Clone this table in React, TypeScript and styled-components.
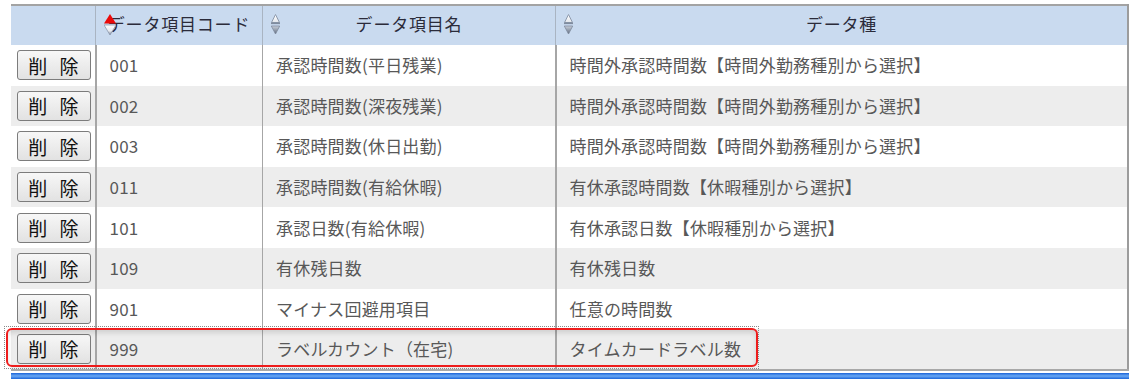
import styled, { createGlobalStyle } from "styled-components";

const GlobalStyle = createGlobalStyle`
  html, body {
    margin: 0;
    padding: 0;
    background: #ffffff;
  }
  body {
    font-family: "Noto Sans CJK JP", "Noto Sans", sans-serif;
  }
`;

const Page = styled.div`
  position: relative;
  width: 1131px;
  height: 381px;
  padding: 4px 2px 0 11px;
  box-sizing: border-box;
`;

const Grid = styled.table`
  width: 1118px;
  border-collapse: collapse;
  table-layout: fixed;
  border-top: 2px solid #a3a3a3;
  border-right: 2px solid #9c9c9c;
  border-bottom: 2px solid #a8a8a8;
`;

const HeadRow = styled.tr`
  height: 40px;
`;

const HeadCell = styled.th<{ $w?: number }>`
  position: relative;
  width: ${(p) => (p.$w ? `${p.$w}px` : "auto")};
  padding: 0 0 3px;
  line-height: 20px;
  background: #c9daef;
  border-left: 1px solid #a9b4c2;
  color: #2b2b3a;
  font-size: 17px;
  font-weight: normal;
  letter-spacing: 0.8px;
  text-align: center;
  &:first-child {
    border-left: none;
  }
`;

const Row = styled.tr<{ $alt: boolean }>`
  height: 40.6px;
  background: ${(p) => (p.$alt ? "#ededed" : "#ffffff")};
`;

const Cell = styled.td<{ $thick?: boolean }>`
  padding: 0 0 0 13px;
  line-height: 20px;
  border-left: ${(p) => (p.$thick ? "2px" : "1px")} solid #a6a6a6;
  color: #585858;
  font-size: 17px;
  letter-spacing: 0.2px;
  white-space: nowrap;
  overflow: hidden;
  vertical-align: middle;
  &:first-child {
    border-left: none;
    padding-left: 6px;
  }
`;

const DeleteButton = styled.button`
  width: 74px;
  height: 30px;
  display: flex;
  align-items: center;
  justify-content: center;
  padding: 0 0 0 3px;
  border: 1px solid #7c7c7c;
  border-radius: 3px;
  background: linear-gradient(#f7f7f7, #e2e2e2);
  color: #111;
  font-family: "Noto Sans CJK JP", sans-serif;
  font-size: 19px;
  letter-spacing: 4px;
  cursor: pointer;
`;

const SortIcon = styled.svg<{ $left: number }>`
  position: absolute;
  left: ${(p) => p.$left}px;
  top: 6px;
`;

const Highlight = styled.div`
  position: absolute;
  left: 6px;
  top: 328px;
  width: 752px;
  height: 39px;
  box-sizing: border-box;
  border: 2px solid #ee1c1c;
  border-radius: 6px;
  box-shadow: inset 0 3px 5px rgba(0, 0, 0, 0.12);
  pointer-events: none;
`;

const FocusRing = styled.div`
  position: absolute;
  left: 4px;
  top: 326px;
  width: 755px;
  height: 43px;
  box-sizing: border-box;
  border: 1px dotted #8a8a8a;
  pointer-events: none;
`;

const ScrollBar = styled.div`
  width: 1118px;
  height: 6px;
  margin-top: 2px;
  background: linear-gradient(#1b63d8, #6aa9f4 50%, #1d66da);
`;

type Item = { code: string; name: string; kind: string };

const items: Item[] = [
  { code: "001", name: "承認時間数(平日残業)", kind: "時間外承認時間数【時間外勤務種別から選択】" },
  { code: "002", name: "承認時間数(深夜残業)", kind: "時間外承認時間数【時間外勤務種別から選択】" },
  { code: "003", name: "承認時間数(休日出勤)", kind: "時間外承認時間数【時間外勤務種別から選択】" },
  { code: "011", name: "承認時間数(有給休暇)", kind: "有休承認時間数【休暇種別から選択】" },
  { code: "101", name: "承認日数(有給休暇)", kind: "有休承認日数【休暇種別から選択】" },
  { code: "109", name: "有休残日数", kind: "有休残日数" },
  { code: "901", name: "マイナス回避用項目", kind: "任意の時間数" },
  { code: "999", name: "ラベルカウント（在宅)", kind: "タイムカードラベル数" },
];

const Sort = ({ active }: { active?: boolean }) =>
  active ? (
    <SortIcon $left={8} width="12" height="24" viewBox="0 0 12 24">
      <defs>
        <linearGradient id="dnA" x1="0" y1="0" x2="0" y2="1">
          <stop offset="0" stopColor="#ffffff" />
          <stop offset="0.6" stopColor="#e6e9ee" />
          <stop offset="1" stopColor="#6c7890" />
        </linearGradient>
      </defs>
      <polygon points="6,2 12,11.5 0,11.5" fill="#ea0a0a" />
      <polygon points="0,13 12,13 6,23" fill="url(#dnA)" stroke="#8d99ad" strokeWidth="0.8" />
    </SortIcon>
  ) : (
    <SortIcon $left={8} width="9" height="24" viewBox="0 0 9 24">
      <defs>
        <linearGradient id="up" x1="0" y1="0" x2="0" y2="1">
          <stop offset="0" stopColor="#ffffff" />
          <stop offset="1" stopColor="#e2e6ec" />
        </linearGradient>
        <linearGradient id="dn" x1="0" y1="0" x2="0" y2="1">
          <stop offset="0" stopColor="#c9d0da" />
          <stop offset="1" stopColor="#5f6b80" />
        </linearGradient>
      </defs>
      <polygon points="4.5,2.5 8.5,10.5 0.5,10.5" fill="url(#up)" stroke="#8e9aad" strokeWidth="1" />
      <rect x="0" y="10.5" width="9" height="1.6" fill="#7f8b9e" />
      <polygon points="0.3,14 8.7,14 4.5,22" fill="url(#dn)" stroke="#7d899c" strokeWidth="0.8" />
    </SortIcon>
  );

export default function App() {
  return (
    <Page>
      <GlobalStyle />
      <Grid>
        <thead>
          <HeadRow>
            <HeadCell $w={84} />
            <HeadCell $w={166}>
              <Sort active />
              データ項目コード
            </HeadCell>
            <HeadCell $w={292}>
              <Sort />
              データ項目名
            </HeadCell>
            <HeadCell>
              <Sort />
              データ種
            </HeadCell>
          </HeadRow>
        </thead>
        <tbody>
          {items.map((it, i) => (
            <Row key={it.code} $alt={i % 2 === 1}>
              <Cell>
                <DeleteButton>削 除</DeleteButton>
              </Cell>
              <Cell $thick>{it.code}</Cell>
              <Cell>{it.name}</Cell>
              <Cell $thick>{it.kind}</Cell>
            </Row>
          ))}
        </tbody>
      </Grid>
      <ScrollBar />
      <FocusRing />
      <Highlight />
    </Page>
  );
}
